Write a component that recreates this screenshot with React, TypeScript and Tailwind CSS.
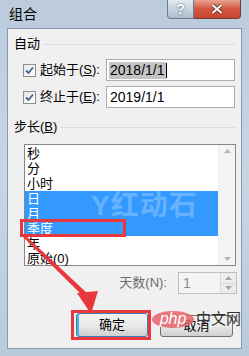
import React from "react";

const cjk = "font-['Liberation_Sans','Noto_Sans_CJK_SC',sans-serif]";

function Check() {
  return (
    <div className="w-[13px] h-[13px] border border-[#8f8f8f] bg-gradient-to-br from-[#e6e6e6] to-white flex items-center justify-center">
      <svg width="9" height="9" viewBox="0 0 9 9">
        <path d="M1 4.5 L3.5 7 L8 1.5" stroke="#4a5f97" strokeWidth="1.8" fill="none" />
      </svg>
    </div>
  );
}

function GroupHead({ label }: { label: React.ReactNode }) {
  return (
    <div className="flex items-center h-[14px] pl-[6px] pr-[5px]">
      <span className="text-[13px] leading-[14px] text-black">{label}</span>
      <div className="flex-1 ml-[3px] h-px bg-[#d5dfe5]" />
    </div>
  );
}

export default function App() {
  const items = ["秒", "分", "小时", "日", "月", "季度", "年", "原始(0)"];
  const selected = [3, 4, 5];

  return (
    <div className={`relative w-[249px] h-[356px] overflow-hidden bg-gradient-to-b from-[#bccbdc] via-[#c8d6e4] to-[#b9cadb] ${cjk}`}>
      {/* title bar */}
      <div className="h-[28px] flex items-center pl-[9px]">
        <span className="text-[14px] leading-[16px] text-black">组合</span>
      </div>
      <div className="absolute top-0 left-[167px] flex">
        <div className="w-[27px] h-[19px] rounded-bl-[4px] border border-[#6b7c92] border-t-0 bg-gradient-to-b from-[#e3eaf2] via-[#c6d2df] to-[#aebdcd] flex items-center justify-center">
          <span className="text-white font-bold text-[14px] leading-[14px] [text-shadow:0_0_2px_#2b3c55]">?</span>
        </div>
        <div className="w-[47px] h-[19px] rounded-br-[4px] border border-[#6e3b3b] border-t-0 border-l-0 bg-gradient-to-b from-[#e8a493] via-[#d0553f] to-[#c9462f] flex items-center justify-center">
          <svg width="12" height="10" viewBox="0 0 12 10">
            <path d="M1.5 1 L10.5 9 M10.5 1 L1.5 9" stroke="#5a2a25" strokeWidth="3.6" />
            <path d="M1.5 1 L10.5 9 M10.5 1 L1.5 9" stroke="white" strokeWidth="2" />
          </svg>
        </div>
      </div>

      {/* client area */}
      <div className="mx-[7px] h-[321px] bg-[#f0f0f0] border border-[#8799ae] pt-[8px]">
        <GroupHead label="自动" />
        <div className="flex flex-col gap-[5px] mt-[8px]">
          <div className="flex items-center h-[22px]">
            <div className="ml-[15px]"><Check /></div>
            <span className="ml-[4px] w-[66px] text-[13px] leading-[14px] text-black">
              起始于(<span className="underline">S</span>):
            </span>
            <div className="w-[129px] h-[22px] bg-white border border-[#acacac] flex items-center pl-[2px]">
              <span className="bg-[#c4c4c4] text-[14px] leading-[17px] px-[1px] text-black">2018/1/1</span>
              <span className="w-px h-[15px] bg-black" />
            </div>
          </div>
          <div className="flex items-center h-[22px]">
            <div className="ml-[15px]"><Check /></div>
            <span className="ml-[4px] w-[66px] text-[13px] leading-[14px] text-black">
              终止于(<span className="underline">E</span>):
            </span>
            <div className="w-[129px] h-[22px] bg-white border border-[#acacac] flex items-center pl-[3px]">
              <span className="text-[14px] leading-[17px] text-black">2019/1/1</span>
            </div>
          </div>
        </div>

        <div className="mt-[12px]">
          <GroupHead label={<>步长(<span className="underline">B</span>)</>} />
        </div>

        {/* listbox */}
        <div className="relative ml-[16px] mr-[5px] mt-[10px] h-[122px] bg-white border border-[#828790] flex">
          <div className="flex-1 pt-[1px]">
            {items.map((it, i) => (
              <div
                key={it}
                className={`h-[15px] pl-[2px] text-[13px] leading-[15px] ${selected.includes(i) ? "bg-[#3399ff] text-white" : "text-black"}`}
              >
                {it}
              </div>
            ))}
          </div>
          <div className="w-[17px] bg-[#f4f4f4] border-l border-[#ececec] flex flex-col justify-between items-center py-[4px]">
            <svg width="7" height="4" viewBox="0 0 7 4"><path d="M0 4 L3.5 0 L7 4 Z" fill="#b4b4b4" /></svg>
            <svg width="7" height="4" viewBox="0 0 7 4"><path d="M0 0 L3.5 4 L7 0 Z" fill="#b4b4b4" /></svg>
          </div>
          {/* faint watermark */}
          <div className="absolute left-[66px] top-[46px] text-[28px] leading-[30px] font-bold text-white/25 tracking-[1px] pointer-events-none">
            Y红动石
          </div>
        </div>

        {/* days row */}
        <div className="flex items-center justify-end mt-[6px] mr-[4px] h-[22px]">
          <span className="text-[13px] leading-[14px] text-[#6d6d6d] mr-[11px]">天数(N):</span>
          <div className="w-[59px] h-[22px] border border-[#bfbfbf] bg-[#f4f4f4] flex">
            <span className="flex-1 pl-[4px] text-[14px] leading-[20px] text-[#8a8a8a]">1</span>
            <div className="w-[16px] flex flex-col border-l border-[#d8d8d8]">
              <div className="flex-1 border-b border-[#d8d8d8] bg-[#ececec] flex items-center justify-center">
                <svg width="7" height="4" viewBox="0 0 7 4"><path d="M0 4 L3.5 0 L7 4 Z" fill="#9aa7b5" /></svg>
              </div>
              <div className="flex-1 bg-[#ececec] flex items-center justify-center">
                <svg width="7" height="4" viewBox="0 0 7 4"><path d="M0 0 L3.5 4 L7 0 Z" fill="#9aa7b5" /></svg>
              </div>
            </div>
          </div>
        </div>

        {/* buttons */}
        <div className="flex mt-[19px] ml-[68px] gap-[12px]">
          <div className="relative">
            <div className="absolute -left-[5px] -top-[3px] w-[80px] h-[30px] border-[3px] border-[#e8373d]" />
            <div className="w-[72px] h-[24px] rounded-[3px] border border-[#3c7fb1] bg-gradient-to-b from-[#f2f2f2] via-[#ebebeb] to-[#cfcfcf] flex items-center justify-center shadow-[inset_2px_0_0_#46b4e6]">
              <span className="text-[13px] leading-[14px] text-black">确定</span>
            </div>
          </div>
          <div className="w-[73px] h-[22px] mt-[2px] rounded-[3px] border border-[#707070] bg-gradient-to-b from-[#f2f2f2] via-[#ebebeb] to-[#cfcfcf] flex items-center justify-center">
            <span className="text-[13px] leading-[14px] text-black">取消</span>
          </div>
        </div>
      </div>

      {/* red box around 季度 */}
      <div className="absolute left-[20px] top-[219px] w-[106px] h-[18px] border-[3px] border-[#e8373d]" />

      {/* php watermark */}
      <div className="absolute left-[152px] top-[311px] w-[42px] h-[17px] rounded-[50%] bg-[#e8636a]/85 flex items-center justify-center">
        <span className="font-['Liberation_Sans',sans-serif] italic text-white text-[16px] leading-[16px] -mt-[2px]">php</span>
      </div>
      <span className="absolute left-[196px] top-[310px] text-[15px] leading-[17px] text-[#333]">中文网</span>

      {/* red arrow */}
      <svg className="absolute left-0 top-0 pointer-events-none" width="249" height="356" viewBox="0 0 249 356">
        <polygon points="23,237 26,236 88,294 84,297" fill="#e8373d" />
        <polygon points="77,293 98,291 91,314" fill="#e8373d" />
      </svg>
    </div>
  );
}
